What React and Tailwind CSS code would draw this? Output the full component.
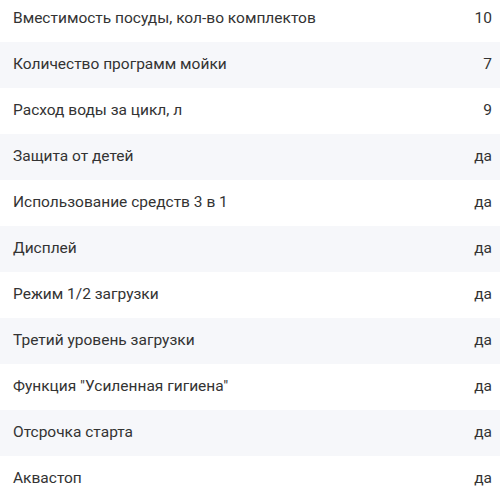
const specs = [
  ["Вместимость посуды, кол-во комплектов", "10"],
  ["Количество программ мойки", "7"],
  ["Расход воды за цикл, л", "9"],
  ["Защита от детей", "да"],
  ["Использование средств 3 в 1", "да"],
  ["Дисплей", "да"],
  ["Режим 1/2 загрузки", "да"],
  ["Третий уровень загрузки", "да"],
  ["Функция \"Усиленная гигиена\"", "да"],
  ["Отсрочка старта", "да"],
  ["Аквастоп", "да"],
];

export default function App() {
  return (
    <div
      className="w-[500px] h-[500px] overflow-hidden bg-white text-[#333333]"
      style={{ fontFamily: "Roboto, 'Noto Sans', sans-serif" }}
    >
      <div className="-mt-[4px]">
        {specs.map(([name, value], i) => (
          <div
            key={i}
            className={`flex items-center justify-between h-[46px] pl-[13px] pr-[8px] text-[15.5px] ${
              i % 2 === 1 ? "bg-[#f6f7fa]" : "bg-white"
            }`}
          >
            <span>{name}</span>
            <span>{value}</span>
          </div>
        ))}
      </div>
    </div>
  );
}
